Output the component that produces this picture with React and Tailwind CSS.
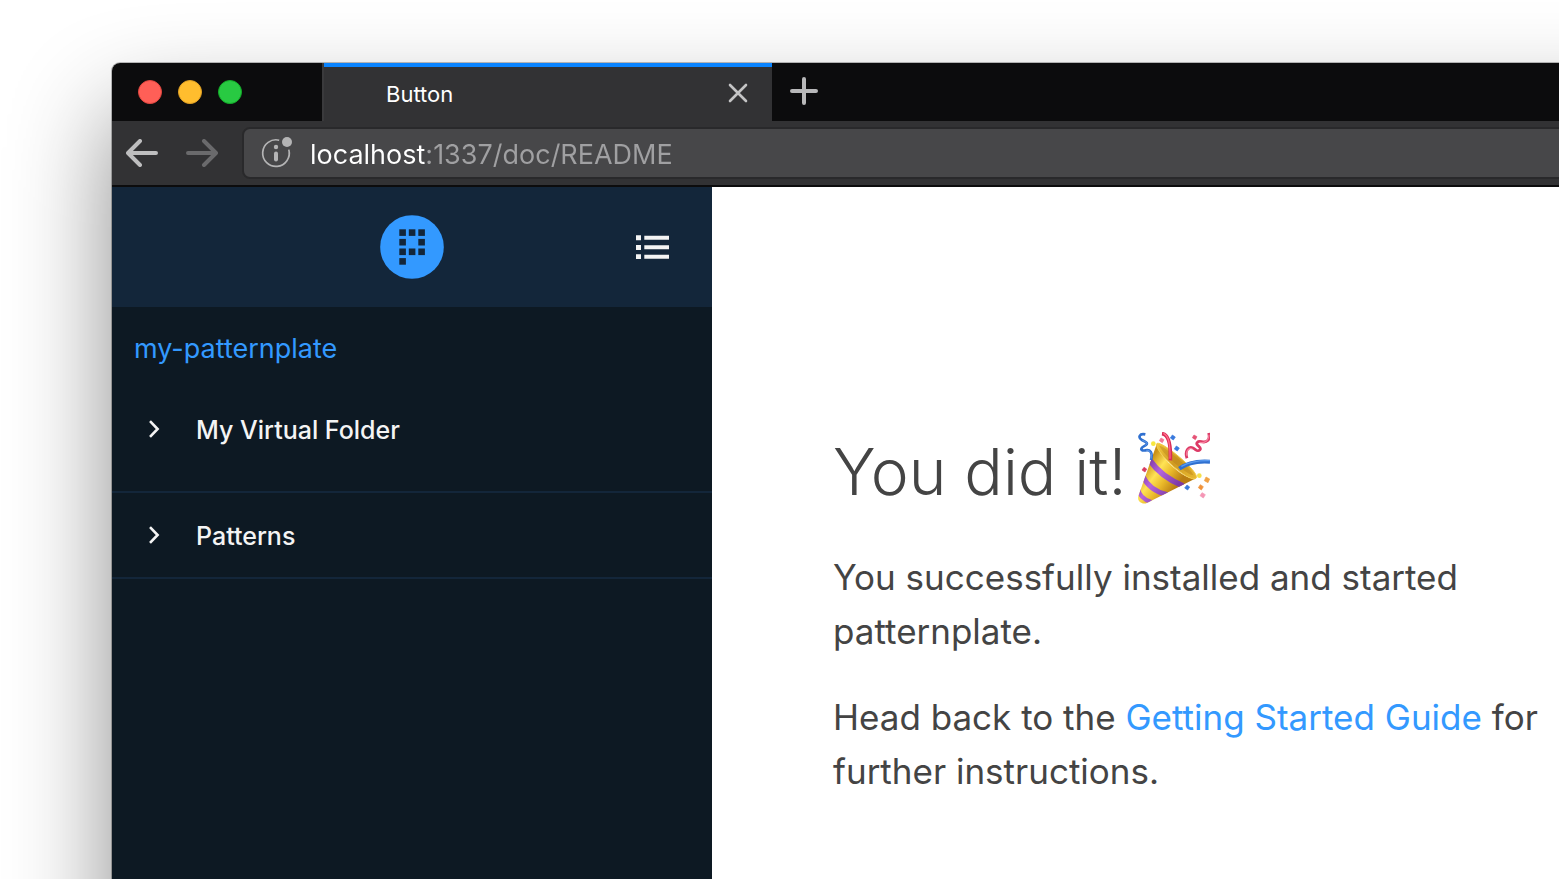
const logoCells = [
  [0, 0], [1, 0], [2, 0],
  [0, 1], [2, 1],
  [0, 2], [1, 2], [2, 2],
  [0, 3],
];

function TrafficLights() {
  return (
    <div className="flex w-[210px] shrink-0 items-center gap-4 pl-[26px]">
      <button aria-label="Close window" className="size-6 rounded-full border border-[#e2463f] bg-[#ff5f57]" />
      <button aria-label="Minimize window" className="size-6 rounded-full border border-[#e0a023] bg-[#ffbd2e]" />
      <button aria-label="Zoom window" className="size-6 rounded-full border border-[#12ac28] bg-[#28ca42]" />
    </div>
  );
}

function TabBar() {
  return (
    <div className="flex h-[58px] bg-[#0c0c0d]">
      <TrafficLights />
      <div className="flex w-[450px] border-l-2 border-[#3a3a3c] bg-[#323234]">
        <div className="flex flex-1 items-center justify-between border-t-4 border-[#0a84ff] pr-6 pl-[62px]">
          <span className="text-[22px] leading-7 text-white">Button</span>
          <button aria-label="Close tab" className="pb-0.5">
            <svg className="size-5" viewBox="0 0 20 20" fill="none" stroke="#c4c4c5" strokeWidth="2.6" strokeLinecap="round">
              <path d="M2 2l16 16M18 2L2 18" />
            </svg>
          </button>
        </div>
      </div>
      <button aria-label="New tab" className="flex items-center px-[18px] pb-0.5">
        <svg className="size-7" viewBox="0 0 28 28" fill="none" stroke="#b8b8b9" strokeWidth="4" strokeLinecap="round">
          <path d="M14 2v24M2 14h24" />
        </svg>
      </button>
    </div>
  );
}

function Toolbar() {
  return (
    <div className="flex h-[66px] items-center border-b-2 border-[#0c0c0d] bg-[#323234] pl-[14px]">
      <button aria-label="Back">
        <svg className="h-7 w-8" viewBox="0 0 32 28" fill="none" stroke="#bebebf" strokeWidth="4" strokeLinecap="round" strokeLinejoin="round">
          <path d="M30 14H3M14 2L2 14l12 12" />
        </svg>
      </button>
      <button aria-label="Forward" className="ml-7">
        <svg className="h-7 w-8" viewBox="0 0 32 28" fill="none" stroke="#6a6a6c" strokeWidth="4" strokeLinecap="round" strokeLinejoin="round">
          <path d="M2 14h27M18 2l12 12-12 12" />
        </svg>
      </button>
      <div className="ml-6 flex h-[52px] flex-1 items-center gap-[18px] rounded-lg border-2 border-[#29292b] bg-[#474749] pl-4">
        <button aria-label="Site information">
          <svg className="size-8" viewBox="0 0 32 32" fill="none">
            <path d="M19.2 3.2A13.3 13.3 0 1 0 28.8 12.6" stroke="#b4b4b5" strokeWidth="1.7" />
            <circle cx="27" cy="5" r="5" fill="#b4b4b5" />
            <circle cx="16" cy="10" r="2.2" fill="#b4b4b5" />
            <path d="M16 16.4v6" stroke="#b4b4b5" strokeWidth="4" strokeLinecap="round" />
          </svg>
        </button>
        <input
          aria-label="Address"
          defaultValue="localhost:1337/doc/README"
          className="w-[600px] bg-linear-to-r from-white from-[116px] to-[#a0a0a2] to-[116px] bg-clip-text pt-1 text-[27px] leading-9 text-transparent outline-none"
        />
      </div>
    </div>
  );
}

function Logo() {
  return (
    <svg className="size-16" viewBox="0 0 64 64" role="img" aria-label="patternplate">
      <circle cx="32" cy="32" r="31.8" fill="#3399ff" />
      {logoCells.map(([col, row]) => (
        <rect key={`${col}-${row}`} x={19.3 + col * 9.5} y={14.3 + row * 9.6} width="6.6" height="6.6" fill="#13263a" />
      ))}
    </svg>
  );
}

function FolderItem({ label }) {
  return (
    <a href="#" className="flex h-[84px] items-center gap-9 pl-9 text-[25px] leading-8 font-medium text-[#f4f4f4]">
      <svg className="h-5 w-3" viewBox="0 0 12 20" fill="none" stroke="#f4f4f4" strokeWidth="2.6">
        <path d="M2 2.2L9.6 10 2 17.8" />
      </svg>
      <span className="pt-0.5">{label}</span>
    </a>
  );
}

function Sidebar() {
  return (
    <aside className="w-[600px] shrink-0 bg-[#0d1923]">
      <header className="grid h-[120px] grid-cols-3 items-center bg-[#13263a]">
        <a href="#" className="col-start-2 justify-self-center">
          <Logo />
        </a>
        <button aria-label="Toggle navigation" className="mr-[43px] justify-self-end">
          <svg className="h-6 w-[33px]" viewBox="0 0 33 24" fill="#f4f4f4">
            <path d="M0 .3h5v5H0zM0 10h5v5H0zM0 19.3h5v4.7H0zM8.3 .8H33v4H8.3zM8.3 10.3H33v4H8.3zM8.3 19.8H33v4H8.3z" />
          </svg>
        </button>
      </header>
      <nav>
        <a href="#" className="flex h-20 items-center pt-1 pl-[22px] text-[27px] leading-9 text-[#3399ff]">
          my-patternplate
        </a>
        <ul>
          <li className="border-b-2 border-[#13263a] pb-5">
            <FolderItem label="My Virtual Folder" />
          </li>
          <li className="border-b-2 border-[#13263a]">
            <FolderItem label="Patterns" />
          </li>
        </ul>
      </nav>
    </aside>
  );
}

function PartyPopper() {
  return (
    <svg className="size-[72px]" viewBox="54 36 216 216" role="img" aria-label="Party popper">
      <defs>
        <linearGradient id="cone" gradientUnits="userSpaceOnUse" x1="75" y1="140" x2="165" y2="205">
          <stop offset="0" stopColor="#c98f16" />
          <stop offset=".35" stopColor="#ffe355" />
          <stop offset=".65" stopColor="#e9b829" />
          <stop offset="1" stopColor="#b97d12" />
        </linearGradient>
        <linearGradient id="mouth" x1="0" y1="0" x2="1" y2="1">
          <stop offset="0" stopColor="#f3c93c" />
          <stop offset=".5" stopColor="#cf9a22" />
          <stop offset="1" stopColor="#e8b930" />
        </linearGradient>
        <linearGradient id="band" gradientUnits="userSpaceOnUse" x1="75" y1="140" x2="165" y2="205">
          <stop offset="0" stopColor="#8139a8" />
          <stop offset=".4" stopColor="#b565dc" />
          <stop offset="1" stopColor="#7d3aa8" />
        </linearGradient>
        <clipPath id="coneClip">
          <path d="M111 70C103 92 190 184 228 175L82 248C68 256 50 244 55 229z" />
        </clipPath>
      </defs>
      <path d="M111 70C103 92 190 184 228 175L82 248C68 256 50 244 55 229z" fill="url(#cone)" />
      <g clipPath="url(#coneClip)" stroke="url(#band)" fill="none">
        <path d="M90 122C112 154 146 180 190 198" strokeWidth="17" />
        <path d="M68 168C80 194 106 216 142 224" strokeWidth="15" />
        <path d="M54 204C56 224 72 240 94 246" strokeWidth="13" />
      </g>
      <path d="M111 70C129 64 244 160 228 175C208 191 98 92 111 70z" fill="url(#mouth)" stroke="#f2ca45" strokeWidth="3" />
      <path d="M118 77C133 77 218 150 220 166C203 164 134 111 118 77z" fill="#b57d17" opacity=".4" />
      <g fill="none" strokeLinecap="butt">
        <path d="M126 41C143 43 153 68 151 121" stroke="#d92c55" strokeWidth="11" />
        <path d="M130 40C146 46 151 69 150 116" stroke="#ff6b88" strokeWidth="3.5" />
        <path d="M178 146C199 130 228 122 270 125" stroke="#2f70d0" strokeWidth="12" />
        <path d="M184 139C205 127 232 121 270 122" stroke="#5a9bf0" strokeWidth="4" />
        <path d="M76 43C58 39 53 53 66 60C78 66 87 70 75 77C59 85 61 94 76 91C91 88 99 97 93 120" stroke="#2f70d0" strokeWidth="8" />
        <path d="M67 61C80 66 86 70 76 76M79 91C91 90 97 100 93 116" stroke="#639cec" strokeWidth="3" />
        <path d="M201 115C193 92 206 78 219 84C229 89 232 97 240 89C247 80 224 76 232 67C240 58 252 74 264 61Q270 54 266 39" stroke="#dc3a66" strokeWidth="8.5" />
        <path d="M200 107C198 91 207 82 217 86M239 67C251 70 266 65 267 44" stroke="#f7819e" strokeWidth="3.5" />
      </g>
      <g strokeWidth="2" strokeLinejoin="round">
        <path d="M157 45l9 6-6 9-9-6z" fill="#3979dc" stroke="#3979dc" />
        <path d="M169 78l9 6-6 9-9-6z" fill="#3979dc" stroke="#3979dc" />
        <path d="M201 195l8 6-6 9-9-6z" fill="#3979dc" stroke="#3979dc" />
        <path d="M123 54l9 5-5 9-9-6z" fill="#f27794" stroke="#f27794" />
        <path d="M222 45l9 5-5 9-9-6z" fill="#e55275" stroke="#e55275" />
        <path d="M72 142l8 5-5 9-9-6z" fill="#d93b5f" stroke="#d93b5f" />
        <path d="M246 218l10 6-6 10-10-7z" fill="#f596b5" stroke="#f596b5" />
        <path d="M258 171l11 6-5 11-11-6z" fill="#f2a244" stroke="#f2a244" />
        <path d="M241 194l9 6-6 10-9-7z" fill="#f0923a" stroke="#f0923a" />
        <circle cx="100" cy="71" r="7" fill="#f8e73f" />
        <circle cx="238" cy="167" r="7" fill="#f5e04a" />
      </g>
    </svg>
  );
}

function Doc() {
  return (
    <main className="flex-1 bg-white pt-[239px] pl-[121px] text-[#444]">
      <div className="max-w-[720px]">
        <div className="mb-10 flex items-center gap-3">
          <h1 className="pt-2 text-[64px] leading-[76px] font-light">You did it!</h1>
          <PartyPopper />
        </div>
        <div className="space-y-8 text-[35px] leading-[54px]">
          <p>You successfully installed and started patternplate.</p>
          <p>
            Head back to the <a href="#" className="text-[#3399ff]">Getting Started Guide</a> for further instructions.
          </p>
        </div>
      </div>
    </main>
  );
}

export default function App() {
  return (
    <div className="flex min-h-screen overflow-hidden bg-white pt-[63px] pl-28 font-['Inter',sans-serif]">
      <div className="-mr-40 -mb-40 flex flex-1 flex-col overflow-hidden rounded-lg shadow-[0_0_0_1px_rgba(0,0,0,0.25),0_50px_100px_rgba(0,0,0,0.46)]">
        <TabBar />
        <Toolbar />
        <div className="flex flex-1">
          <Sidebar />
          <Doc />
        </div>
      </div>
    </div>
  );
}
